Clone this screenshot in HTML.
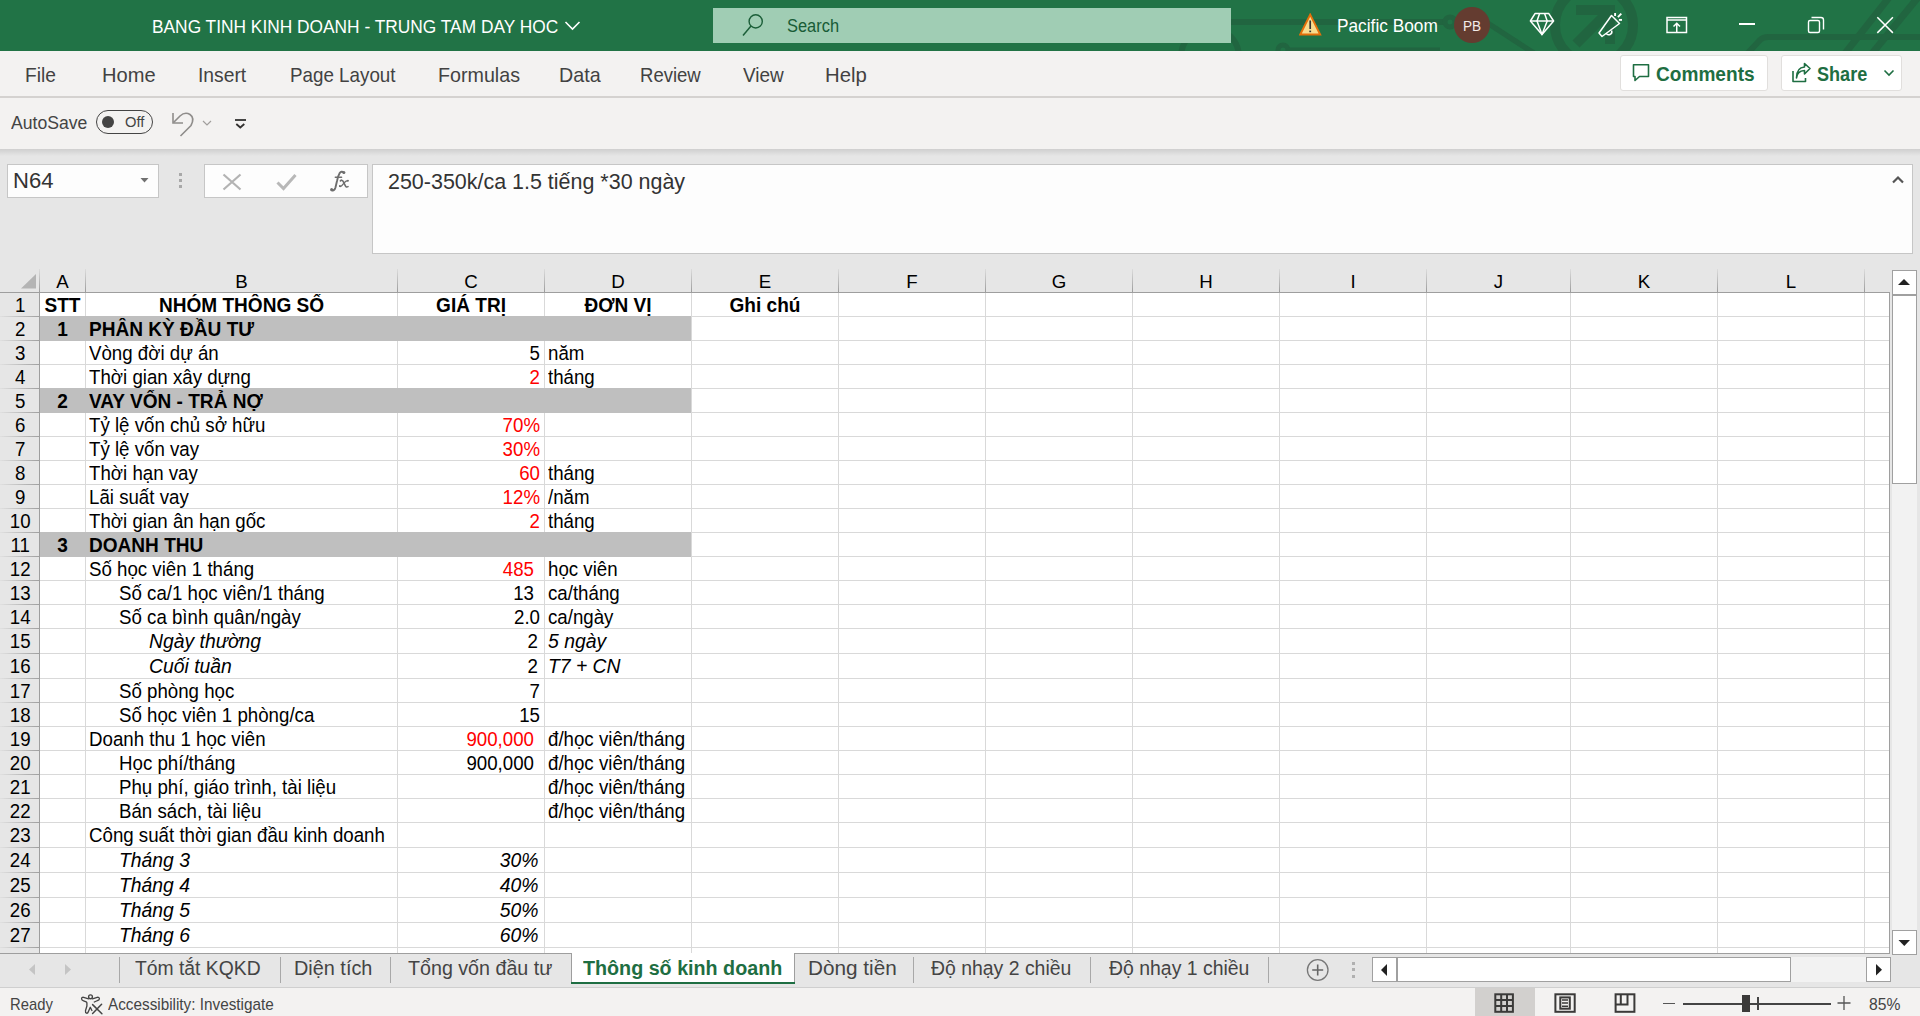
<!DOCTYPE html><html><head><meta charset="utf-8"><style>
*{margin:0;padding:0;box-sizing:border-box}
html,body{width:1920px;height:1016px;overflow:hidden;background:#e6e6e6;font-family:"Liberation Sans", sans-serif;position:relative}
.a{position:absolute}
.t{position:absolute;white-space:pre;line-height:1}
.ui{color:#444444}
.cell{position:absolute;white-space:pre;line-height:1;font-size:18.7px;color:#000;transform:scaleY(1.05);transform-origin:0 15px}
.hl{position:absolute;background:#d9d9d9;height:1px}
.vl{position:absolute;background:#d9d9d9;width:1px}
</style></head><body><div class="a" style="left:0;top:0;width:1920px;height:51px;background:#217346;overflow:hidden">
<svg class="a" style="left:0;top:0" width="1920" height="51" viewBox="0 0 1920 51">
<g fill="none" stroke="#216540">
<path d="M1200 21.9 H1444" stroke-width="6"/>
<circle cx="1450" cy="21.9" r="5" stroke-width="5"/>
<path d="M1476 15.5 L1536 54.5" stroke-width="5.5"/>
<circle cx="1594" cy="25" r="39" stroke-width="10"/>
<path d="M1576 10 H1615 M1610 5 V44 M1606 14 L1576 44" stroke-width="10"/>
<path d="M1746 55 L1760 40 Q1763 37 1768 37 H1920" stroke-width="6"/>
<path d="M1843 56 L1891 -5" stroke-width="7"/>
<path d="M1870 56 L1920 -5" stroke-width="7"/>
<circle cx="1210" cy="57" r="29" stroke-width="6"/>
<circle cx="1283" cy="50" r="5" stroke-width="5"/>
<path d="M1288 50.5 H1440" stroke-width="6"/>
</g></svg>
<div class="t" style="left:152.27px;top:18.00px;font-size:18.75px;font-weight:400;font-style:normal;color:#fff;transform:scaleX(0.9241);transform-origin:0 0;">BANG TINH KINH DOANH - TRUNG TAM DAY HOC</div>
<svg class="a" style="left:564px;top:20px" width="17" height="12"><path d="M1.5 2 L8.5 9 L15.5 2" fill="none" stroke="#fff" stroke-width="1.6"/></svg>
<div class="a" style="left:713px;top:8px;width:518px;height:35px;background:#a0cdb4"></div>
<svg class="a" style="left:738px;top:10px" width="30" height="30"><circle cx="17.7" cy="11.4" r="6.6" fill="none" stroke="#1b5e38" stroke-width="1.4"/><path d="M13 16 L5 25.5" stroke="#1b5e38" stroke-width="1.5"/></svg>
<div class="t" style="left:786.96px;top:17.00px;font-size:18.90px;font-weight:400;font-style:normal;color:#185c37;transform:scaleX(0.8699);transform-origin:0 0;">Search</div>
<svg class="a" style="left:1299px;top:13px" width="23" height="23" viewBox="0 0 23 23">
<path d="M11.2 1.6 L21.2 21.5 H1.2 Z" fill="#f8dc8e" stroke="#e46f0a" stroke-width="1.9" stroke-linejoin="miter"/>
<path d="M11.2 7.5 V16" stroke="#333" stroke-width="1.7"/><rect x="10.3" y="17.6" width="1.8" height="1.6" fill="#333"/></svg>
<div class="t" style="left:1336.57px;top:18.00px;font-size:17.73px;font-weight:400;font-style:normal;color:#fff;transform:scaleX(0.9747);transform-origin:0 0;">Pacific Boom</div>
<div class="a" style="left:1454px;top:7px;width:36px;height:36px;border-radius:50%;background:#643c30"></div>
<div class="t" style="left:1462.58px;top:18.00px;font-size:15.41px;font-weight:400;font-style:normal;color:#f3ebe8;transform:scaleX(0.8816);transform-origin:0 0;">PB</div>
<svg class="a" style="left:1528px;top:11px" width="28" height="27" viewBox="0 0 28 27">
<g fill="none" stroke="#fff" stroke-width="1.5" stroke-linejoin="round">
<path d="M7 2.6 H20.8 L25.6 10 L14 23.6 L2.4 10 Z"/><path d="M2.4 10 H25.6"/><path d="M11.6 2.6 L9 10 L14 23.6 L19.2 10 L16.6 2.6"/>
</g></svg>
<svg class="a" style="left:1596px;top:11px" width="30" height="28" viewBox="0 0 30 28">
<g fill="none" stroke="#fff" stroke-width="1.5" stroke-linejoin="round">
<path d="M3 22 L15.5 4.5 L23.5 12.5 L6 25.5 Z"/><path d="M10 22 A3 3 0 0 0 15.5 19.5"/>
<path d="M19.1 2 V5" stroke-width="1.9"/><path d="M25.3 2.7 L21.9 6.1" stroke-width="1.9"/><path d="M22.9 8.9 H26" stroke-width="1.9"/>
</g></svg>
<svg class="a" style="left:1665px;top:15px" width="24" height="20" viewBox="0 0 24 20">
<g fill="none" stroke="#fff" stroke-width="1.5">
<rect x="2" y="2.5" width="19.5" height="15"/><path d="M2 5 H21.5"/><path d="M11.75 17.5 V8.5 M8.5 11.5 L11.75 8.3 L15 11.5"/>
</g></svg>
<div class="a" style="left:1739px;top:23px;width:16px;height:1.5px;background:#fff"></div>
<svg class="a" style="left:1806px;top:15px" width="20" height="20" viewBox="0 0 20 20">
<g fill="none" stroke="#fff" stroke-width="1.4">
<rect x="2.5" y="5.5" width="11" height="12" rx="1.5"/><path d="M5.5 2.5 H15 Q17.5 2.5 17.5 5 V14.5"/>
</g></svg>
<svg class="a" style="left:1875px;top:15px" width="20" height="20"><path d="M2.3 2.3 L17.9 17.9 M17.9 2.3 L2.3 17.9" stroke="#fff" stroke-width="1.5"/></svg>
</div>
<div class="a" style="left:0;top:51px;width:1920px;height:98px;background:#f3f2f1"></div>
<div class="a" style="left:0;top:96px;width:1920px;height:2px;background:#d4d2d0"></div>
<div class="t" style="left:24.82px;top:65.00px;font-size:20.06px;font-weight:400;font-style:normal;color:#424242;transform:scaleX(0.9568);transform-origin:0 0;">File</div>
<div class="t" style="left:101.84px;top:65.00px;font-size:20.06px;font-weight:400;font-style:normal;color:#424242;transform:scaleX(1.0020);transform-origin:0 0;">Home</div>
<div class="t" style="left:197.52px;top:65.00px;font-size:20.06px;font-weight:400;font-style:normal;color:#424242;transform:scaleX(0.9618);transform-origin:0 0;">Insert</div>
<div class="t" style="left:289.65px;top:65.00px;font-size:20.06px;font-weight:400;font-style:normal;color:#424242;transform:scaleX(0.9375);transform-origin:0 0;">Page Layout</div>
<div class="t" style="left:437.68px;top:65.00px;font-size:20.06px;font-weight:400;font-style:normal;color:#424242;transform:scaleX(0.9811);transform-origin:0 0;">Formulas</div>
<div class="t" style="left:559.07px;top:65.00px;font-size:20.06px;font-weight:400;font-style:normal;color:#424242;transform:scaleX(0.9824);transform-origin:0 0;">Data</div>
<div class="t" style="left:640.17px;top:65.00px;font-size:20.06px;font-weight:400;font-style:normal;color:#424242;transform:scaleX(0.9239);transform-origin:0 0;">Review</div>
<div class="t" style="left:743.21px;top:65.00px;font-size:20.06px;font-weight:400;font-style:normal;color:#424242;transform:scaleX(0.9449);transform-origin:0 0;">View</div>
<div class="t" style="left:825.02px;top:65.00px;font-size:20.06px;font-weight:400;font-style:normal;color:#424242;transform:scaleX(1.0139);transform-origin:0 0;">Help</div>
<div class="a" style="left:1620px;top:55px;width:148px;height:36px;background:#fff;border:1px solid #e1dfdd;border-radius:3px"></div>
<svg class="a" style="left:1631px;top:62px" width="20" height="22" viewBox="0 0 20 22">
<path d="M2.5 2.8 H17.5 V14.5 H8.5 L4 18.5 V14.5 H2.5 Z" fill="none" stroke="#1e6e42" stroke-width="1.6" stroke-linejoin="round"/></svg>
<div class="t" style="left:1656.14px;top:64.00px;font-size:20.35px;font-weight:700;font-style:normal;color:#1e6e42;transform:scaleX(0.9379);transform-origin:0 0;">Comments</div>
<div class="a" style="left:1781px;top:55px;width:121px;height:36px;background:#fff;border:1px solid #e1dfdd;border-radius:3px"></div>
<svg class="a" style="left:1790px;top:62px" width="22" height="22" viewBox="0 0 22 22">
<g fill="none" stroke="#1e6e42" stroke-width="1.6" stroke-linejoin="round">
<path d="M3 9 V19.5 H15.5 V16"/><path d="M6.5 16 Q7 9 14.5 8.5 V12 L20 6.5 L14.5 1.5 V5 Q6.5 5.5 6.5 16 Z"/>
</g></svg>
<div class="t" style="left:1817.26px;top:65.00px;font-size:19.48px;font-weight:700;font-style:normal;color:#1e6e42;transform:scaleX(0.9285);transform-origin:0 0;">Share</div>
<svg class="a" style="left:1883px;top:68px" width="12" height="10"><path d="M1.5 2.5 L6 7 L10.5 2.5" fill="none" stroke="#1e6e42" stroke-width="1.6"/></svg>
<div class="t" style="left:11.21px;top:114.00px;font-size:18.53px;font-weight:400;font-style:normal;color:#444;transform:scaleX(0.9515);transform-origin:0 0;">AutoSave</div>
<div class="a" style="left:96px;top:110px;width:57px;height:24px;border:1.2px solid #444;border-radius:12px"></div>
<div class="a" style="left:102px;top:116px;width:12px;height:12px;border-radius:50%;background:#444"></div>
<div class="t" style="left:124.70px;top:116.00px;font-size:13.81px;font-weight:400;font-style:normal;color:#444;transform:scaleX(1.0664);transform-origin:0 0;">Off</div>
<svg class="a" style="left:168px;top:108px" width="32" height="32" viewBox="0 0 32 32">
<g fill="none" stroke="#8f8d8b" stroke-width="1.6">
<path d="M5 5 V15 H15"/><path d="M5.5 14.5 L12 8 Q17 3.5 22 6.5 Q27 10 23 17.5 L12.5 28"/>
</g></svg>
<svg class="a" style="left:201px;top:119px" width="12" height="9"><path d="M2 2 L6 6 L10 2" fill="none" stroke="#a19f9d" stroke-width="1.2"/></svg>
<svg class="a" style="left:232px;top:116px" width="16" height="14" viewBox="0 0 16 14">
<g fill="none" stroke="#323130" stroke-width="1.8"><path d="M3 4 H14"/><path d="M4.3 8 L8.3 11.5 L12.3 8"/></g></svg>
<div class="a" style="left:0;top:149px;width:1920px;height:7px;background:linear-gradient(#cfcfcf,#e6e6e6)"></div>
<div class="a" style="left:7px;top:164px;width:152px;height:34px;background:#fdfdfd;border:1px solid #c6c6c6"></div>
<div class="t" style="left:13.18px;top:169.00px;font-size:22.82px;font-weight:400;font-style:normal;color:#333;transform:scaleX(0.9667);transform-origin:0 0;">N64</div>
<svg class="a" style="left:139px;top:176px" width="12" height="8"><path d="M1.5 2 H9.5 L5.5 6.5 Z" fill="#707070"/></svg>
<div class="a" style="left:179px;top:173px;width:3px;height:3px;background:#a8a8a8"></div>
<div class="a" style="left:179px;top:179.1px;width:3px;height:3px;background:#a8a8a8"></div>
<div class="a" style="left:179px;top:185.1px;width:3px;height:3px;background:#a8a8a8"></div>
<div class="a" style="left:204px;top:164px;width:164px;height:34px;background:#fdfdfd;border:1px solid #c6c6c6"></div>
<svg class="a" style="left:220px;top:171px" width="24" height="22"><path d="M3.5 3.5 L20.5 18.5 M20.5 3.5 L3.5 18.5" stroke="#b3b3b3" stroke-width="2.2"/></svg>
<svg class="a" style="left:274px;top:171px" width="26" height="22"><path d="M3.5 11.5 L9.5 17.5 L21.5 4" fill="none" stroke="#b8b8b8" stroke-width="3"/></svg>
<svg class="a" style="left:326px;top:166px" width="26" height="30" viewBox="0 0 26 30">
<g fill="none" stroke="#6e6e6e" stroke-linecap="round">
<path d="M17.6 6.6 Q15.6 4.6 13.6 7.2 Q12.1 9.6 11 15 L9.4 21.8 Q8.4 25.2 5.6 24.4" stroke-width="1.9"/>
<path d="M9.3 11.3 H15.6" stroke-width="1.4"/>
<path d="M14.4 14.9 Q15.9 13.3 17 15.2 L19.4 19.9 Q20.3 21.6 22 20.6" stroke-width="1.6"/>
<path d="M21.7 14.6 Q20.2 14.6 18.6 16.4 L15.8 19.6 Q14.8 20.8 13.8 20.4" stroke-width="1.4"/>
</g>
<g fill="#6e6e6e"><circle cx="17.9" cy="6.4" r="1.5"/><circle cx="5.6" cy="23.6" r="1.5"/><circle cx="13.9" cy="20.1" r="1"/><circle cx="21.9" cy="14.7" r="1"/></g>
</svg>
<div class="a" style="left:372px;top:164px;width:1541px;height:90px;background:#fdfdfd;border:1px solid #c6c6c6"></div>
<div class="t" style="left:388.18px;top:171.00px;font-size:22.53px;font-weight:400;font-style:normal;color:#333;transform:scaleX(0.9531);transform-origin:0 0;">250-350k/ca 1.5 tiếng *30 ngày</div>
<svg class="a" style="left:1891px;top:175px" width="14" height="10"><path d="M2 7.5 L7 2.5 L12 7.5" fill="none" stroke="#555" stroke-width="2.2"/></svg>
<div class="a" style="left:40px;top:293px;width:1849px;height:660px;background:#fff"></div>
<div class="a" style="left:40px;top:316px;width:651px;height:25px;background:#bfbfbf"></div>
<div class="a" style="left:40px;top:388px;width:651px;height:25px;background:#bfbfbf"></div>
<div class="a" style="left:40px;top:532px;width:651px;height:25px;background:#bfbfbf"></div>
<div class="hl" style="left:40px;top:316px;width:1849px"></div>
<div class="hl" style="left:40px;top:340px;width:1849px"></div>
<div class="hl" style="left:40px;top:364px;width:1849px"></div>
<div class="hl" style="left:40px;top:388px;width:1849px"></div>
<div class="hl" style="left:40px;top:412px;width:1849px"></div>
<div class="hl" style="left:40px;top:436px;width:1849px"></div>
<div class="hl" style="left:40px;top:460px;width:1849px"></div>
<div class="hl" style="left:40px;top:484px;width:1849px"></div>
<div class="hl" style="left:40px;top:508px;width:1849px"></div>
<div class="hl" style="left:40px;top:532px;width:1849px"></div>
<div class="hl" style="left:40px;top:556px;width:1849px"></div>
<div class="hl" style="left:40px;top:580px;width:1849px"></div>
<div class="hl" style="left:40px;top:604px;width:1849px"></div>
<div class="hl" style="left:40px;top:628px;width:1849px"></div>
<div class="hl" style="left:40px;top:653px;width:1849px"></div>
<div class="hl" style="left:40px;top:678px;width:1849px"></div>
<div class="hl" style="left:40px;top:702px;width:1849px"></div>
<div class="hl" style="left:40px;top:726px;width:1849px"></div>
<div class="hl" style="left:40px;top:750px;width:1849px"></div>
<div class="hl" style="left:40px;top:774px;width:1849px"></div>
<div class="hl" style="left:40px;top:798px;width:1849px"></div>
<div class="hl" style="left:40px;top:822px;width:1849px"></div>
<div class="hl" style="left:40px;top:847px;width:1849px"></div>
<div class="hl" style="left:40px;top:872px;width:1849px"></div>
<div class="hl" style="left:40px;top:897px;width:1849px"></div>
<div class="hl" style="left:40px;top:922px;width:1849px"></div>
<div class="hl" style="left:40px;top:947px;width:1849px"></div>
<div class="vl" style="left:85px;top:293px;height:660px"></div>
<div class="vl" style="left:397px;top:293px;height:660px"></div>
<div class="vl" style="left:544px;top:293px;height:660px"></div>
<div class="vl" style="left:691px;top:293px;height:660px"></div>
<div class="vl" style="left:838px;top:293px;height:660px"></div>
<div class="vl" style="left:985px;top:293px;height:660px"></div>
<div class="vl" style="left:1132px;top:293px;height:660px"></div>
<div class="vl" style="left:1279px;top:293px;height:660px"></div>
<div class="vl" style="left:1426px;top:293px;height:660px"></div>
<div class="vl" style="left:1570px;top:293px;height:660px"></div>
<div class="vl" style="left:1717px;top:293px;height:660px"></div>
<div class="vl" style="left:1864px;top:293px;height:660px"></div>
<div class="a" style="left:40px;top:316px;width:651px;height:25px;background:#bfbfbf"></div>
<div class="a" style="left:40px;top:388px;width:651px;height:25px;background:#bfbfbf"></div>
<div class="a" style="left:40px;top:532px;width:651px;height:25px;background:#bfbfbf"></div>
<div class="a" style="left:0;top:269px;width:1889px;height:23px;background:#e6e6e6"></div>
<div class="a" style="left:0;top:292px;width:1890px;height:1px;background:#9e9e9e"></div>
<div class="a" style="left:85px;top:269px;width:1px;height:23px;background:linear-gradient(#dcdcdc,#9c9c9c)"></div>
<div class="a" style="left:397px;top:269px;width:1px;height:23px;background:linear-gradient(#dcdcdc,#9c9c9c)"></div>
<div class="a" style="left:544px;top:269px;width:1px;height:23px;background:linear-gradient(#dcdcdc,#9c9c9c)"></div>
<div class="a" style="left:691px;top:269px;width:1px;height:23px;background:linear-gradient(#dcdcdc,#9c9c9c)"></div>
<div class="a" style="left:838px;top:269px;width:1px;height:23px;background:linear-gradient(#dcdcdc,#9c9c9c)"></div>
<div class="a" style="left:985px;top:269px;width:1px;height:23px;background:linear-gradient(#dcdcdc,#9c9c9c)"></div>
<div class="a" style="left:1132px;top:269px;width:1px;height:23px;background:linear-gradient(#dcdcdc,#9c9c9c)"></div>
<div class="a" style="left:1279px;top:269px;width:1px;height:23px;background:linear-gradient(#dcdcdc,#9c9c9c)"></div>
<div class="a" style="left:1426px;top:269px;width:1px;height:23px;background:linear-gradient(#dcdcdc,#9c9c9c)"></div>
<div class="a" style="left:1570px;top:269px;width:1px;height:23px;background:linear-gradient(#dcdcdc,#9c9c9c)"></div>
<div class="a" style="left:1717px;top:269px;width:1px;height:23px;background:linear-gradient(#dcdcdc,#9c9c9c)"></div>
<div class="a" style="left:1864px;top:269px;width:1px;height:23px;background:linear-gradient(#dcdcdc,#9c9c9c)"></div>
<div class="a" style="left:39px;top:269px;width:1px;height:23px;background:linear-gradient(#dcdcdc,#9c9c9c)"></div>
<svg class="a" style="left:18px;top:273px" width="20" height="17"><path d="M18 1 V15.5 H3 Z" fill="#b4b4b4"/></svg>
<div class="t" style="left:40px;width:45px;top:273px;font-size:18.7px;text-align:center;color:#000">A</div>
<div class="t" style="left:86px;width:311px;top:273px;font-size:18.7px;text-align:center;color:#000">B</div>
<div class="t" style="left:398px;width:146px;top:273px;font-size:18.7px;text-align:center;color:#000">C</div>
<div class="t" style="left:545px;width:146px;top:273px;font-size:18.7px;text-align:center;color:#000">D</div>
<div class="t" style="left:692px;width:146px;top:273px;font-size:18.7px;text-align:center;color:#000">E</div>
<div class="t" style="left:839px;width:146px;top:273px;font-size:18.7px;text-align:center;color:#000">F</div>
<div class="t" style="left:986px;width:146px;top:273px;font-size:18.7px;text-align:center;color:#000">G</div>
<div class="t" style="left:1133px;width:146px;top:273px;font-size:18.7px;text-align:center;color:#000">H</div>
<div class="t" style="left:1280px;width:146px;top:273px;font-size:18.7px;text-align:center;color:#000">I</div>
<div class="t" style="left:1427px;width:143px;top:273px;font-size:18.7px;text-align:center;color:#000">J</div>
<div class="t" style="left:1571px;width:146px;top:273px;font-size:18.7px;text-align:center;color:#000">K</div>
<div class="t" style="left:1718px;width:146px;top:273px;font-size:18.7px;text-align:center;color:#000">L</div>
<div class="a" style="left:0;top:293px;width:39px;height:660px;background:#e6e6e6"></div>
<div class="a" style="left:39px;top:293px;width:1px;height:660px;background:#9e9e9e"></div>
<div class="a" style="left:0;top:316px;width:39px;height:1px;background:linear-gradient(90deg,#e0e0e0,#a0a0a0)"></div>
<div class="a" style="left:0;top:340px;width:39px;height:1px;background:linear-gradient(90deg,#e0e0e0,#a0a0a0)"></div>
<div class="a" style="left:0;top:364px;width:39px;height:1px;background:linear-gradient(90deg,#e0e0e0,#a0a0a0)"></div>
<div class="a" style="left:0;top:388px;width:39px;height:1px;background:linear-gradient(90deg,#e0e0e0,#a0a0a0)"></div>
<div class="a" style="left:0;top:412px;width:39px;height:1px;background:linear-gradient(90deg,#e0e0e0,#a0a0a0)"></div>
<div class="a" style="left:0;top:436px;width:39px;height:1px;background:linear-gradient(90deg,#e0e0e0,#a0a0a0)"></div>
<div class="a" style="left:0;top:460px;width:39px;height:1px;background:linear-gradient(90deg,#e0e0e0,#a0a0a0)"></div>
<div class="a" style="left:0;top:484px;width:39px;height:1px;background:linear-gradient(90deg,#e0e0e0,#a0a0a0)"></div>
<div class="a" style="left:0;top:508px;width:39px;height:1px;background:linear-gradient(90deg,#e0e0e0,#a0a0a0)"></div>
<div class="a" style="left:0;top:532px;width:39px;height:1px;background:linear-gradient(90deg,#e0e0e0,#a0a0a0)"></div>
<div class="a" style="left:0;top:556px;width:39px;height:1px;background:linear-gradient(90deg,#e0e0e0,#a0a0a0)"></div>
<div class="a" style="left:0;top:580px;width:39px;height:1px;background:linear-gradient(90deg,#e0e0e0,#a0a0a0)"></div>
<div class="a" style="left:0;top:604px;width:39px;height:1px;background:linear-gradient(90deg,#e0e0e0,#a0a0a0)"></div>
<div class="a" style="left:0;top:628px;width:39px;height:1px;background:linear-gradient(90deg,#e0e0e0,#a0a0a0)"></div>
<div class="a" style="left:0;top:653px;width:39px;height:1px;background:linear-gradient(90deg,#e0e0e0,#a0a0a0)"></div>
<div class="a" style="left:0;top:678px;width:39px;height:1px;background:linear-gradient(90deg,#e0e0e0,#a0a0a0)"></div>
<div class="a" style="left:0;top:702px;width:39px;height:1px;background:linear-gradient(90deg,#e0e0e0,#a0a0a0)"></div>
<div class="a" style="left:0;top:726px;width:39px;height:1px;background:linear-gradient(90deg,#e0e0e0,#a0a0a0)"></div>
<div class="a" style="left:0;top:750px;width:39px;height:1px;background:linear-gradient(90deg,#e0e0e0,#a0a0a0)"></div>
<div class="a" style="left:0;top:774px;width:39px;height:1px;background:linear-gradient(90deg,#e0e0e0,#a0a0a0)"></div>
<div class="a" style="left:0;top:798px;width:39px;height:1px;background:linear-gradient(90deg,#e0e0e0,#a0a0a0)"></div>
<div class="a" style="left:0;top:822px;width:39px;height:1px;background:linear-gradient(90deg,#e0e0e0,#a0a0a0)"></div>
<div class="a" style="left:0;top:847px;width:39px;height:1px;background:linear-gradient(90deg,#e0e0e0,#a0a0a0)"></div>
<div class="a" style="left:0;top:872px;width:39px;height:1px;background:linear-gradient(90deg,#e0e0e0,#a0a0a0)"></div>
<div class="a" style="left:0;top:897px;width:39px;height:1px;background:linear-gradient(90deg,#e0e0e0,#a0a0a0)"></div>
<div class="a" style="left:0;top:922px;width:39px;height:1px;background:linear-gradient(90deg,#e0e0e0,#a0a0a0)"></div>
<div class="a" style="left:0;top:947px;width:39px;height:1px;background:linear-gradient(90deg,#e0e0e0,#a0a0a0)"></div>
<div class="t" style="left:0.7px;width:39px;top:297px;font-size:18.7px;text-align:center;color:#000;transform:scaleY(1.05);transform-origin:0 15px">1</div>
<div class="t" style="left:0.7px;width:39px;top:321px;font-size:18.7px;text-align:center;color:#000;transform:scaleY(1.05);transform-origin:0 15px">2</div>
<div class="t" style="left:0.7px;width:39px;top:345px;font-size:18.7px;text-align:center;color:#000;transform:scaleY(1.05);transform-origin:0 15px">3</div>
<div class="t" style="left:0.7px;width:39px;top:369px;font-size:18.7px;text-align:center;color:#000;transform:scaleY(1.05);transform-origin:0 15px">4</div>
<div class="t" style="left:0.7px;width:39px;top:393px;font-size:18.7px;text-align:center;color:#000;transform:scaleY(1.05);transform-origin:0 15px">5</div>
<div class="t" style="left:0.7px;width:39px;top:417px;font-size:18.7px;text-align:center;color:#000;transform:scaleY(1.05);transform-origin:0 15px">6</div>
<div class="t" style="left:0.7px;width:39px;top:441px;font-size:18.7px;text-align:center;color:#000;transform:scaleY(1.05);transform-origin:0 15px">7</div>
<div class="t" style="left:0.7px;width:39px;top:465px;font-size:18.7px;text-align:center;color:#000;transform:scaleY(1.05);transform-origin:0 15px">8</div>
<div class="t" style="left:0.7px;width:39px;top:489px;font-size:18.7px;text-align:center;color:#000;transform:scaleY(1.05);transform-origin:0 15px">9</div>
<div class="t" style="left:0.7px;width:39px;top:513px;font-size:18.7px;text-align:center;color:#000;transform:scaleY(1.05);transform-origin:0 15px">10</div>
<div class="t" style="left:0.7px;width:39px;top:537px;font-size:18.7px;text-align:center;color:#000;transform:scaleY(1.05);transform-origin:0 15px">11</div>
<div class="t" style="left:0.7px;width:39px;top:561px;font-size:18.7px;text-align:center;color:#000;transform:scaleY(1.05);transform-origin:0 15px">12</div>
<div class="t" style="left:0.7px;width:39px;top:585px;font-size:18.7px;text-align:center;color:#000;transform:scaleY(1.05);transform-origin:0 15px">13</div>
<div class="t" style="left:0.7px;width:39px;top:609px;font-size:18.7px;text-align:center;color:#000;transform:scaleY(1.05);transform-origin:0 15px">14</div>
<div class="t" style="left:0.7px;width:39px;top:633px;font-size:18.7px;text-align:center;color:#000;transform:scaleY(1.05);transform-origin:0 15px">15</div>
<div class="t" style="left:0.7px;width:39px;top:658px;font-size:18.7px;text-align:center;color:#000;transform:scaleY(1.05);transform-origin:0 15px">16</div>
<div class="t" style="left:0.7px;width:39px;top:683px;font-size:18.7px;text-align:center;color:#000;transform:scaleY(1.05);transform-origin:0 15px">17</div>
<div class="t" style="left:0.7px;width:39px;top:707px;font-size:18.7px;text-align:center;color:#000;transform:scaleY(1.05);transform-origin:0 15px">18</div>
<div class="t" style="left:0.7px;width:39px;top:731px;font-size:18.7px;text-align:center;color:#000;transform:scaleY(1.05);transform-origin:0 15px">19</div>
<div class="t" style="left:0.7px;width:39px;top:755px;font-size:18.7px;text-align:center;color:#000;transform:scaleY(1.05);transform-origin:0 15px">20</div>
<div class="t" style="left:0.7px;width:39px;top:779px;font-size:18.7px;text-align:center;color:#000;transform:scaleY(1.05);transform-origin:0 15px">21</div>
<div class="t" style="left:0.7px;width:39px;top:803px;font-size:18.7px;text-align:center;color:#000;transform:scaleY(1.05);transform-origin:0 15px">22</div>
<div class="t" style="left:0.7px;width:39px;top:827px;font-size:18.7px;text-align:center;color:#000;transform:scaleY(1.05);transform-origin:0 15px">23</div>
<div class="t" style="left:0.7px;width:39px;top:852px;font-size:18.7px;text-align:center;color:#000;transform:scaleY(1.05);transform-origin:0 15px">24</div>
<div class="t" style="left:0.7px;width:39px;top:877px;font-size:18.7px;text-align:center;color:#000;transform:scaleY(1.05);transform-origin:0 15px">25</div>
<div class="t" style="left:0.7px;width:39px;top:902px;font-size:18.7px;text-align:center;color:#000;transform:scaleY(1.05);transform-origin:0 15px">26</div>
<div class="t" style="left:0.7px;width:39px;top:927px;font-size:18.7px;text-align:center;color:#000;transform:scaleY(1.05);transform-origin:0 15px">27</div>
<div class="a" style="left:1889px;top:292px;width:1px;height:661px;background:#9e9e9e"></div>
<div class="cell" style="left:40px;width:45px;top:297px;text-align:center;font-weight:700;transform:scale(1.02,1.05);transform-origin:50% 15px">STT</div>
<div class="cell" style="left:86px;width:311px;top:297px;text-align:center;font-weight:700;transform:scale(1.02,1.05);transform-origin:50% 15px">NHÓM THÔNG SỐ</div>
<div class="cell" style="left:398px;width:146px;top:297px;text-align:center;font-weight:700;transform:scale(1.02,1.05);transform-origin:50% 15px">GIÁ TRỊ</div>
<div class="cell" style="left:545px;width:146px;top:297px;text-align:center;font-weight:700;transform:scale(1.02,1.05);transform-origin:50% 15px">ĐƠN VỊ</div>
<div class="cell" style="left:692px;width:146px;top:297px;text-align:center;font-weight:700;transform:scale(1.02,1.05);transform-origin:50% 15px">Ghi chú</div>
<div class="cell" style="left:40px;width:45px;top:321px;text-align:center;font-weight:700;transform:scale(1.02,1.05);transform-origin:50% 15px">1</div>
<div class="cell" style="left:89px;top:321px;font-weight:700;transform:scale(1.02,1.05);transform-origin:0 15px">PHÂN KỲ ĐẦU TƯ</div>
<div class="cell" style="left:89px;top:345px;transform:scale(1.0,1.05);transform-origin:0 15px">Vòng đời dự án</div>
<div class="cell" style="right:1380px;top:345px;transform:scale(1.0,1.05);transform-origin:100% 15px">5</div>
<div class="cell" style="left:548px;top:345px;transform:scale(1.0,1.05);transform-origin:0 15px">năm</div>
<div class="cell" style="left:89px;top:369px;transform:scale(1.0,1.05);transform-origin:0 15px">Thời gian xây dựng</div>
<div class="cell" style="right:1380px;top:369px;color:#ff0000;transform:scale(1.0,1.05);transform-origin:100% 15px">2</div>
<div class="cell" style="left:548px;top:369px;transform:scale(1.0,1.05);transform-origin:0 15px">tháng</div>
<div class="cell" style="left:40px;width:45px;top:393px;text-align:center;font-weight:700;transform:scale(1.02,1.05);transform-origin:50% 15px">2</div>
<div class="cell" style="left:89px;top:393px;font-weight:700;transform:scale(1.02,1.05);transform-origin:0 15px">VAY VỐN - TRẢ NỢ</div>
<div class="cell" style="left:89px;top:417px;transform:scale(1.0,1.05);transform-origin:0 15px">Tỷ lệ vốn chủ sở hữu</div>
<div class="cell" style="right:1380px;top:417px;color:#ff0000;transform:scale(1.0,1.05);transform-origin:100% 15px">70%</div>
<div class="cell" style="left:89px;top:441px;transform:scale(1.0,1.05);transform-origin:0 15px">Tỷ lệ vốn vay</div>
<div class="cell" style="right:1380px;top:441px;color:#ff0000;transform:scale(1.0,1.05);transform-origin:100% 15px">30%</div>
<div class="cell" style="left:89px;top:465px;transform:scale(1.0,1.05);transform-origin:0 15px">Thời hạn vay</div>
<div class="cell" style="right:1380px;top:465px;color:#ff0000;transform:scale(1.0,1.05);transform-origin:100% 15px">60</div>
<div class="cell" style="left:548px;top:465px;transform:scale(1.0,1.05);transform-origin:0 15px">tháng</div>
<div class="cell" style="left:89px;top:489px;transform:scale(1.0,1.05);transform-origin:0 15px">Lãi suất vay</div>
<div class="cell" style="right:1380px;top:489px;color:#ff0000;transform:scale(1.0,1.05);transform-origin:100% 15px">12%</div>
<div class="cell" style="left:548px;top:489px;transform:scale(1.0,1.05);transform-origin:0 15px">/năm</div>
<div class="cell" style="left:89px;top:513px;transform:scale(1.0,1.05);transform-origin:0 15px">Thời gian ân hạn gốc</div>
<div class="cell" style="right:1380px;top:513px;color:#ff0000;transform:scale(1.0,1.05);transform-origin:100% 15px">2</div>
<div class="cell" style="left:548px;top:513px;transform:scale(1.0,1.05);transform-origin:0 15px">tháng</div>
<div class="cell" style="left:40px;width:45px;top:537px;text-align:center;font-weight:700;transform:scale(1.02,1.05);transform-origin:50% 15px">3</div>
<div class="cell" style="left:89px;top:537px;font-weight:700;transform:scale(1.02,1.05);transform-origin:0 15px">DOANH THU</div>
<div class="cell" style="left:89px;top:561px;transform:scale(1.0,1.05);transform-origin:0 15px">Số học viên 1 tháng</div>
<div class="cell" style="right:1386px;top:561px;color:#ff0000;transform:scale(1.0,1.05);transform-origin:100% 15px">485</div>
<div class="cell" style="left:548px;top:561px;transform:scale(1.0,1.05);transform-origin:0 15px">học viên</div>
<div class="cell" style="left:119px;top:585px;transform:scale(1.0,1.05);transform-origin:0 15px">Số ca/1 học viên/1 tháng</div>
<div class="cell" style="right:1386px;top:585px;transform:scale(1.0,1.05);transform-origin:100% 15px">13</div>
<div class="cell" style="left:548px;top:585px;transform:scale(1.0,1.05);transform-origin:0 15px">ca/tháng</div>
<div class="cell" style="left:119px;top:609px;transform:scale(1.0,1.05);transform-origin:0 15px">Số ca bình quân/ngày</div>
<div class="cell" style="right:1380px;top:609px;transform:scale(1.0,1.05);transform-origin:100% 15px">2.0</div>
<div class="cell" style="left:548px;top:609px;transform:scale(1.0,1.05);transform-origin:0 15px">ca/ngày</div>
<div class="cell" style="left:149px;top:633px;font-style:italic;transform:scale(1.035,1.05);transform-origin:0 15px">Ngày thường</div>
<div class="cell" style="right:1382px;top:633px;transform:scale(1.0,1.05);transform-origin:100% 15px">2</div>
<div class="cell" style="left:548px;top:633px;font-style:italic;transform:scale(1.035,1.05);transform-origin:0 15px">5 ngày</div>
<div class="cell" style="left:149px;top:658px;font-style:italic;transform:scale(1.035,1.05);transform-origin:0 15px">Cuối tuần</div>
<div class="cell" style="right:1382px;top:658px;transform:scale(1.0,1.05);transform-origin:100% 15px">2</div>
<div class="cell" style="left:548px;top:658px;font-style:italic;transform:scale(1.035,1.05);transform-origin:0 15px">T7 + CN</div>
<div class="cell" style="left:119px;top:683px;transform:scale(1.0,1.05);transform-origin:0 15px">Số phòng học</div>
<div class="cell" style="right:1380px;top:683px;transform:scale(1.0,1.05);transform-origin:100% 15px">7</div>
<div class="cell" style="left:119px;top:707px;transform:scale(1.0,1.05);transform-origin:0 15px">Số học viên 1 phòng/ca</div>
<div class="cell" style="right:1380px;top:707px;transform:scale(1.0,1.05);transform-origin:100% 15px">15</div>
<div class="cell" style="left:89px;top:731px;transform:scale(1.0,1.05);transform-origin:0 15px">Doanh thu 1 học viên</div>
<div class="cell" style="right:1386px;top:731px;color:#ff0000;transform:scale(1.0,1.05);transform-origin:100% 15px">900,000</div>
<div class="cell" style="left:548px;top:731px;transform:scale(1.0,1.05);transform-origin:0 15px">đ/học viên/tháng</div>
<div class="cell" style="left:119px;top:755px;transform:scale(1.0,1.05);transform-origin:0 15px">Học phí/tháng</div>
<div class="cell" style="right:1386px;top:755px;transform:scale(1.0,1.05);transform-origin:100% 15px">900,000</div>
<div class="cell" style="left:548px;top:755px;transform:scale(1.0,1.05);transform-origin:0 15px">đ/học viên/tháng</div>
<div class="cell" style="left:119px;top:779px;transform:scale(1.0,1.05);transform-origin:0 15px">Phụ phí, giáo trình, tài liệu</div>
<div class="cell" style="left:548px;top:779px;transform:scale(1.0,1.05);transform-origin:0 15px">đ/học viên/tháng</div>
<div class="cell" style="left:119px;top:803px;transform:scale(1.0,1.05);transform-origin:0 15px">Bán sách, tài liệu</div>
<div class="cell" style="left:548px;top:803px;transform:scale(1.0,1.05);transform-origin:0 15px">đ/học viên/tháng</div>
<div class="cell" style="left:89px;top:827px;transform:scale(1.0,1.05);transform-origin:0 15px">Công suất thời gian đầu kinh doanh</div>
<div class="cell" style="left:119px;top:852px;font-style:italic;transform:scale(1.035,1.05);transform-origin:0 15px">Tháng 3</div>
<div class="cell" style="right:1382px;top:852px;font-style:italic;transform:scale(1.035,1.05);transform-origin:100% 15px">30%</div>
<div class="cell" style="left:119px;top:877px;font-style:italic;transform:scale(1.035,1.05);transform-origin:0 15px">Tháng 4</div>
<div class="cell" style="right:1382px;top:877px;font-style:italic;transform:scale(1.035,1.05);transform-origin:100% 15px">40%</div>
<div class="cell" style="left:119px;top:902px;font-style:italic;transform:scale(1.035,1.05);transform-origin:0 15px">Tháng 5</div>
<div class="cell" style="right:1382px;top:902px;font-style:italic;transform:scale(1.035,1.05);transform-origin:100% 15px">50%</div>
<div class="cell" style="left:119px;top:927px;font-style:italic;transform:scale(1.035,1.05);transform-origin:0 15px">Tháng 6</div>
<div class="cell" style="right:1382px;top:927px;font-style:italic;transform:scale(1.035,1.05);transform-origin:100% 15px">60%</div>
<div class="a" style="left:1890px;top:269px;width:30px;height:685px;background:#e6e6e6"></div>
<div class="a" style="left:1892px;top:270px;width:25px;height:25px;background:#fff;border:1px solid #a0a0a0"></div>
<svg class="a" style="left:1897px;top:277px" width="14" height="10"><path d="M1 8 L7 2 L13 8 Z" fill="#222"/></svg>
<div class="a" style="left:1892px;top:295px;width:25px;height:635px;background:#f2f2f2"></div>
<div class="a" style="left:1892px;top:295px;width:25px;height:189px;background:#fff;border:1px solid #a0a0a0"></div>
<div class="a" style="left:1892px;top:930px;width:25px;height:25px;background:#fff;border:1px solid #a0a0a0"></div>
<svg class="a" style="left:1897px;top:938px" width="14" height="10"><path d="M1.5 2 L7.3 8 L13 2 Z" fill="#222"/></svg>
<div class="a" style="left:0;top:953px;width:1890px;height:35px;background:#e6e6e6"></div>
<div class="a" style="left:0;top:953px;width:571px;height:1px;background:#9e9e9e"></div>
<div class="a" style="left:795px;top:953px;width:1095px;height:1px;background:#9e9e9e"></div>
<div class="a" style="left:0;top:987px;width:1920px;height:1px;background:#cfcfcf"></div>
<svg class="a" style="left:27px;top:962px" width="48" height="16"><path d="M8 2 V13 L2 7.5 Z" fill="#c4c4c4"/><path d="M38 2 V13 L44 7.5 Z" fill="#c4c4c4"/></svg>
<div class="a" style="left:119px;top:957px;width:1px;height:26px;background:#a8a8a8"></div>
<div class="a" style="left:280px;top:957px;width:1px;height:26px;background:#a8a8a8"></div>
<div class="a" style="left:390px;top:957px;width:1px;height:26px;background:#a8a8a8"></div>
<div class="a" style="left:913px;top:957px;width:1px;height:26px;background:#a8a8a8"></div>
<div class="a" style="left:1090px;top:957px;width:1px;height:26px;background:#a8a8a8"></div>
<div class="a" style="left:1268px;top:957px;width:1px;height:26px;background:#a8a8a8"></div>
<div class="t" style="left:135.47px;top:959.00px;font-size:19.91px;font-weight:400;font-style:normal;color:#444;transform:scaleX(0.9704);transform-origin:0 0;">Tóm tắt KQKD</div>
<div class="t" style="left:293.86px;top:959.00px;font-size:19.91px;font-weight:400;font-style:normal;color:#444;transform:scaleX(0.9978);transform-origin:0 0;">Diện tích</div>
<div class="t" style="left:407.56px;top:959.00px;font-size:19.91px;font-weight:400;font-style:normal;color:#444;transform:scaleX(0.9878);transform-origin:0 0;">Tổng vốn đầu tư</div>
<div class="t" style="left:807.89px;top:959.00px;font-size:19.91px;font-weight:400;font-style:normal;color:#444;transform:scaleX(1.0420);transform-origin:0 0;">Dòng tiền</div>
<div class="t" style="left:931.15px;top:959.00px;font-size:19.91px;font-weight:400;font-style:normal;color:#444;transform:scaleX(0.9752);transform-origin:0 0;">Độ nhạy 2 chiều</div>
<div class="t" style="left:1108.85px;top:959.00px;font-size:19.91px;font-weight:400;font-style:normal;color:#444;transform:scaleX(0.9759);transform-origin:0 0;">Độ nhạy 1 chiều</div>
<div class="a" style="left:571px;top:953px;width:224px;height:30px;background:#fff;border-left:1px solid #9e9e9e;border-right:1px solid #9e9e9e"></div>
<div class="a" style="left:571px;top:982px;width:224px;height:2px;background:#1e6e42"></div>
<div class="t" style="left:583.30px;top:958.00px;font-size:20.35px;font-weight:700;font-style:normal;color:#1e6e42;transform:scaleX(0.9687);transform-origin:0 0;">Thông số kinh doanh</div>
<svg class="a" style="left:1305px;top:958px" width="26" height="26"><circle cx="12.7" cy="12" r="10.3" fill="none" stroke="#777" stroke-width="1.3"/><path d="M12.7 6.5 V17.5 M7.2 12 H18.2" stroke="#666" stroke-width="1.6"/></svg>
<div class="a" style="left:1352px;top:961.5px;width:3px;height:3px;background:#b0b0b0"></div>
<div class="a" style="left:1352px;top:968px;width:3px;height:3px;background:#b0b0b0"></div>
<div class="a" style="left:1352px;top:974.5px;width:3px;height:3px;background:#b0b0b0"></div>
<div class="a" style="left:1372px;top:957px;width:519px;height:25px;background:#f2f2f2"></div>
<div class="a" style="left:1372px;top:957px;width:25px;height:25px;background:#fff;border:1px solid #a0a0a0"></div>
<svg class="a" style="left:1378px;top:962px" width="12" height="16"><path d="M9 2 V14 L3 8 Z" fill="#222"/></svg>
<div class="a" style="left:1397px;top:957px;width:394px;height:25px;background:#fff;border:1px solid #a0a0a0"></div>
<div class="a" style="left:1866px;top:957px;width:25px;height:25px;background:#fff;border:1px solid #a0a0a0"></div>
<svg class="a" style="left:1873px;top:962px" width="12" height="16"><path d="M3 2 V13.5 L9 7.7 Z" fill="#222"/></svg>
<div class="a" style="left:0;top:988px;width:1920px;height:28px;background:#f3f2f1"></div>
<div class="t" style="left:9.68px;top:997.00px;font-size:15.70px;font-weight:400;font-style:normal;color:#444;transform:scaleX(0.9448);transform-origin:0 0;">Ready</div>
<svg class="a" style="left:76px;top:990px" width="30" height="26" viewBox="0 0 30 26">
<g fill="none" stroke="#444" stroke-width="1.35" stroke-linecap="round" stroke-linejoin="round">
<circle cx="14.5" cy="6.8" r="1.9"/>
<path d="M12.6 8.9 L7.6 7.3 Q5.6 6.9 5.6 9 Q5.8 10.3 7.6 10.9 L10.2 11.9 Q10.9 12.3 10.9 13 V16 L9.5 20.6 Q9.2 22.9 10.5 23.2 Q11.8 23.4 12.2 22 L14.3 17.3 L15.9 20.5"/>
<path d="M16.4 8.9 L21.2 7.3 Q23.2 6.9 23.4 8.7 Q23.4 10 21.6 10.5 L18.3 12"/>
<path d="M16.6 14.6 L25.9 23.8 M25.6 14.3 L16.6 23.5" stroke-width="1.5"/>
</g></svg>
<div class="t" style="left:108.26px;top:997.00px;font-size:15.70px;font-weight:400;font-style:normal;color:#444;transform:scaleX(0.9745);transform-origin:0 0;">Accessibility: Investigate</div>
<div class="a" style="left:1475px;top:988px;width:60px;height:28px;background:#d2d0ce"></div>
<svg class="a" style="left:1490px;top:990px" width="150" height="26" viewBox="0 0 150 26">
<g fill="none" stroke="#3b3a39" stroke-width="2">
<rect x="5.3" y="4.3" width="17.6" height="17.5"/><path d="M11.2 4.3 V21.8 M17 4.3 V21.8 M5.3 10.1 H22.9 M5.3 15.9 H22.9"/>
<rect x="65.4" y="4.3" width="19.3" height="17.5"/><rect x="70.3" y="7.4" width="9.5" height="11.3"/>
<path d="M72 10 H78 M72 13.1 H78 M72 16.2 H78" stroke-width="1.5"/>
<rect x="125.6" y="4.3" width="18.8" height="17.5"/><path d="M125.6 14.4 H137.5 V4.3 M130.8 4.3 V14.4"/>
</g></svg>
<div class="a" style="left:1663px;top:1003px;width:12px;height:1.3px;background:#555"></div>
<div class="a" style="left:1683px;top:1003px;width:148px;height:1.6px;background:#444"></div>
<div class="a" style="left:1742px;top:995px;width:8px;height:17px;background:#3b3a39"></div>
<div class="a" style="left:1757px;top:997px;width:1.5px;height:13px;background:#444"></div>
<svg class="a" style="left:1836px;top:994px" width="16" height="18"><path d="M8 2 V16 M1.5 9 H14.5" stroke="#555" stroke-width="1.3"/></svg>
<div class="t" style="left:1868.73px;top:997.00px;font-size:15.63px;font-weight:400;font-style:normal;color:#444;transform:scaleX(1.0041);transform-origin:0 0;">85%</div></body></html>
